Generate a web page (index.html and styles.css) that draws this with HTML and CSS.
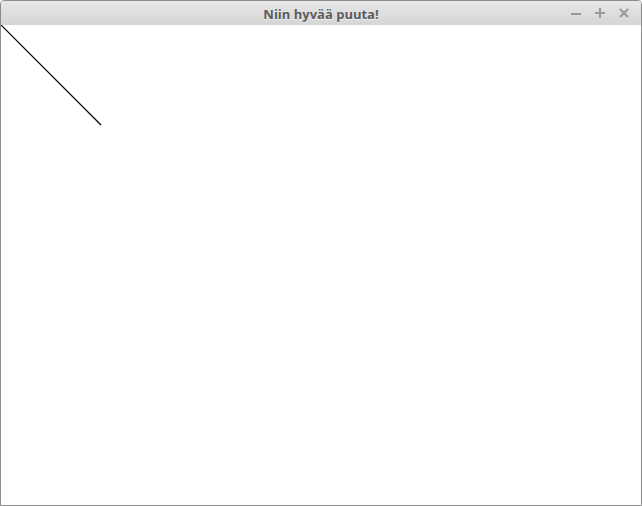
FILE: index.html
```html
<!DOCTYPE html>
<html>
<head>
<meta charset="utf-8">
<link rel="stylesheet" href="styles.css">
</head>
<body>
<div class="window">
  <div class="titlebar">
    <div class="title">Niin hyvää puuta!</div>
    <div class="controls">
      <svg class="btn" width="10" height="10" viewBox="0 0 10 10"><rect x="0" y="5" width="10" height="2" fill="#9a9a9a"/></svg>
      <svg class="btn" width="10" height="10" viewBox="0 0 10 10"><rect x="0" y="4" width="10" height="2" fill="#9a9a9a"/><rect x="4" y="0" width="2" height="10" fill="#9a9a9a"/></svg>
      <svg class="btn" width="10" height="10" viewBox="0 0 10 10"><path d="M1 1 L9 9 M9 1 L1 9" stroke="#9a9a9a" stroke-width="2.2"/></svg>
    </div>
  </div>
  <div class="canvas">
    <svg class="drawing" width="640" height="480" viewBox="0 0 640 480"><line x1="0" y1="0" x2="100" y2="100" stroke="#000" stroke-width="1.2"/></svg>
  </div>
</div>
</body>
</html>
```
FILE: styles.css
```css
html, body {
  margin: 0;
  padding: 0;
  background: #ffffff;
}
.window {
  width: 642px;
  height: 506px;
  box-sizing: border-box;
  border: 1px solid #8c8c8c;
  border-radius: 4px 4px 0 0;
  display: flex;
  flex-direction: column;
  overflow: hidden;
  background: #fff;
}
.titlebar {
  height: 24px;
  flex: none;
  background: linear-gradient(#e8e8e8, #d5d5d5);
  position: relative;
  display: flex;
  align-items: center;
  justify-content: center;
}
.title {
  font-family: "Open Sans", "Noto Sans", sans-serif;
  font-weight: bold;
  font-size: 13px;
  color: #5c5c5c;
  text-shadow: 0 1px 0 rgba(255,255,255,0.6);
  margin-top: 1px;
}
.controls {
  position: absolute;
  right: 12px;
  top: 7px;
  display: flex;
  gap: 14px;
}
.btn {
  display: block;
}
.canvas {
  flex: 1;
  background: #fff;
}
.drawing {
  display: block;
}
```
